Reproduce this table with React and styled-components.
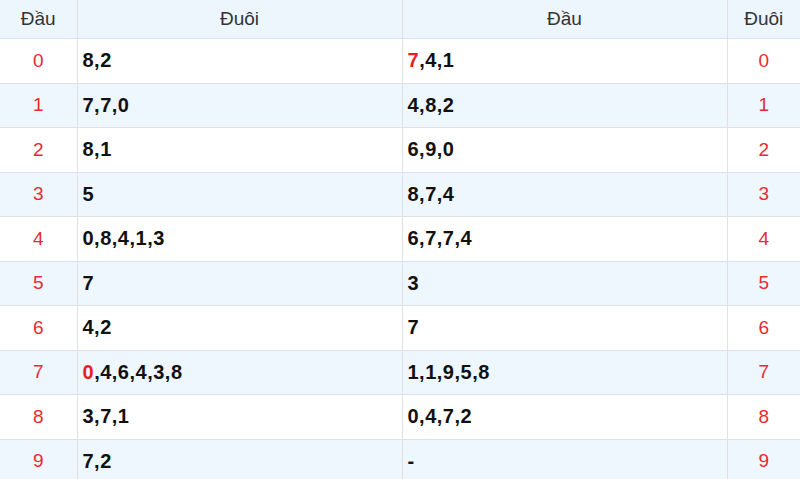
import React from "react";
import styled, { createGlobalStyle } from "styled-components";

const Global = createGlobalStyle`
  html, body { margin: 0; padding: 0; background: #fff; }
  body { font-family: "Liberation Sans", Arial, sans-serif; overflow: hidden; }
`;

const Table = styled.table`
  width: 800px;
  border-collapse: collapse;
  table-layout: fixed;
  font-family: "Liberation Sans", Arial, sans-serif;
`;

const HeadCell = styled.th`
  height: 38px;
  padding: 0;
  background: #edf5fd;
  color: #333;
  font-weight: normal;
  font-size: 19px;
  text-align: center;
  border: 1px solid #dee2e6;
  border-top: none;
  &:first-child { border-left: none; }
  &:last-child { border-right: none; }
`;

const Row = styled.tr`
  background: ${(p) => (p.$alt ? "#eef6fe" : "#ffffff")};
`;

const KeyCell = styled.td`
  height: 43.5px;
  padding: 0;
  text-align: center;
  color: #ea2a30;
  font-size: 19px;
  border: 1px solid #dee2e6;
  &:first-child { border-left: none; }
  &:last-child { border-right: none; }
`;

const ValCell = styled.td`
  padding: 0 0 0 5px;
  text-align: left;
  color: #111;
  font-weight: bold;
  font-size: 20px;
  letter-spacing: 0.5px;
  border: 1px solid #dee2e6;
`;

const Hot = styled.span`
  color: #ec1c24;
`;

const rows = [
  { k: 0, l: "8,2", r: [["7", true], [",4,1"]] },
  { k: 1, l: "7,7,0", r: "4,8,2" },
  { k: 2, l: "8,1", r: "6,9,0" },
  { k: 3, l: "5", r: "8,7,4" },
  { k: 4, l: "0,8,4,1,3", r: "6,7,7,4" },
  { k: 5, l: "7", r: "3" },
  { k: 6, l: "4,2", r: "7" },
  { k: 7, l: [["0", true], [",4,6,4,3,8"]], r: "1,1,9,5,8" },
  { k: 8, l: "3,7,1", r: "0,4,7,2" },
  { k: 9, l: "7,2", r: "-" },
];

const renderVal = (v) =>
  typeof v === "string"
    ? v
    : v.map(([t, hot], i) => (hot ? <Hot key={i}>{t}</Hot> : <span key={i}>{t}</span>));

export default function App() {
  return (
    <>
      <Global />
      <Table>
        <colgroup>
          <col style={{ width: 77 }} />
          <col style={{ width: 325 }} />
          <col style={{ width: 325 }} />
          <col style={{ width: 73 }} />
        </colgroup>
        <thead>
          <tr>
            <HeadCell>Đầu</HeadCell>
            <HeadCell>Đuôi</HeadCell>
            <HeadCell>Đầu</HeadCell>
            <HeadCell>Đuôi</HeadCell>
          </tr>
        </thead>
        <tbody>
          {rows.map((r) => (
            <Row key={r.k} $alt={r.k % 2 === 1}>
              <KeyCell>{r.k}</KeyCell>
              <ValCell>{renderVal(r.l)}</ValCell>
              <ValCell>{renderVal(r.r)}</ValCell>
              <KeyCell>{r.k}</KeyCell>
            </Row>
          ))}
        </tbody>
      </Table>
    </>
  );
}
